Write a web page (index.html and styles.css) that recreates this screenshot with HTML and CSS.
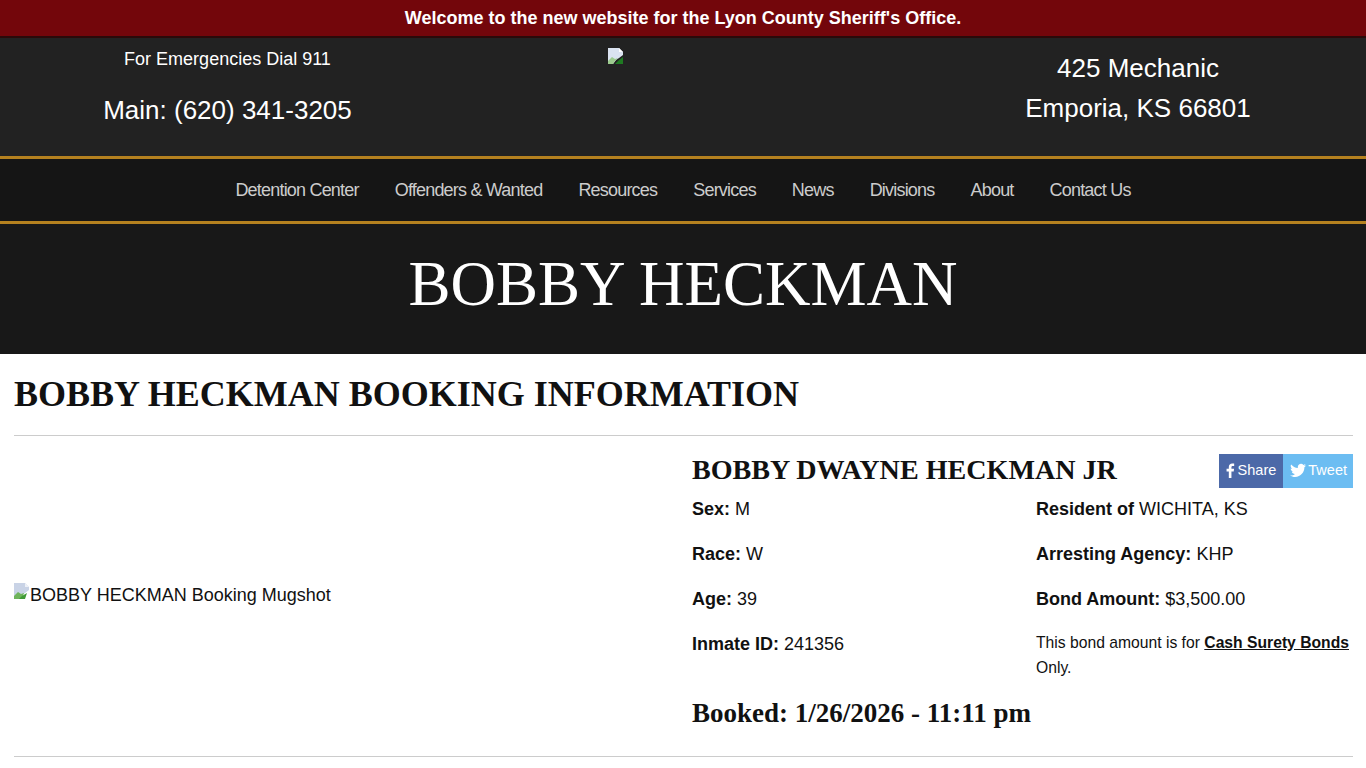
FILE: index.html
```html
<!DOCTYPE html>
<html lang="en">
<head>
  <meta charset="UTF-8" />
  <meta name="viewport" content="width=device-width, initial-scale=1.0"/>
  <title>Bobby Heckman - Lyon County Sheriff's Office</title>
  <link rel="stylesheet" href="styles.css">
</head>
<body>
  <div class="welcome">Welcome to the new website for the Lyon County Sheriff's Office.</div>

  <header class="top">
    <div class="top-left">
      <p class="emergency">For Emergencies Dial 911</p>
      <p class="phone">Main: (620) 341-3205</p>
    </div>
    <div class="top-logo">
      <svg class="broken" viewBox="0 0 16 16" aria-hidden="true">
        <path d="M0 0h11l4 4v3l-4 3-3 2-3 4H0z" fill="#dbe3f1"/>
        <path d="M11 0l4 4h-4z" fill="#fff"/>
        <path d="M0 16v-3l4-4 3 2 3-1-3 3-2 3z" fill="#9ccb8e"/>
        <path d="M7 16l4-4 4-3v7z" fill="#1f7a22"/>
      </svg>
    </div>
    <div class="top-right">
      <p>425 Mechanic</p>
      <p>Emporia, KS 66801</p>
    </div>
  </header>

  <nav class="mainnav">
    <a href="#">Detention Center</a>
    <a href="#">Offenders &amp; Wanted</a>
    <a href="#">Resources</a>
    <a href="#">Services</a>
    <a href="#">News</a>
    <a href="#">Divisions</a>
    <a href="#">About</a>
    <a href="#">Contact Us</a>
  </nav>

  <div class="pagetitle">BOBBY HECKMAN</div>

  <main class="content">
    <h1>BOBBY HECKMAN BOOKING INFORMATION</h1>
    <hr>
    <div class="booking">
      <div class="mugshot">
        <svg class="broken" viewBox="0 0 16 16" aria-hidden="true">
          <path d="M0 0h11l4 4v3l-4 3-3 2-3 4H0z" fill="#c9d3e6"/>
          <path d="M11 0l4 4h-4z" fill="#eef1f7"/>
          <path d="M0 16v-3l4-4 3 2 3-1-1 3-1 3z" fill="#6fb45c"/>
          <path d="M5 16l3-3 5-3-2 6z" fill="#3f9a35"/>
        </svg><span>BOBBY HECKMAN Booking Mugshot</span>
      </div>
      <div class="info">
        <div class="info-head">
          <h2>BOBBY DWAYNE HECKMAN JR</h2>
          <div class="share">
            <a class="fb" href="#">
              <svg viewBox="1 0 9 16" aria-hidden="true"><path d="M6.500 16V9h2.400l.4-2.800H6.500V4.500c0-.8.2-1.400 1.400-1.400h1.500V.6C9.100.6 8.300.5 7.300.5 5.200.5 3.700 1.800 3.700 4.200v2H1.300V9h2.400v7z" fill="#fff"/></svg>
              Share</a>
            <a class="tw" href="#">
              <svg viewBox="0 0 16 14" aria-hidden="true"><path d="M16 1.900c-.6.300-1.200.4-1.900.5.700-.4 1.200-1 1.400-1.800-.6.400-1.300.7-2.100.8C12.800.7 12 .3 11.100.3 9.300.3 7.800 1.800 7.800 3.600c0 .3 0 .5.100.8C5.200 4.200 2.800 2.900 1.100.9.800 1.400.7 2 .7 2.600c0 1.100.6 2.100 1.500 2.700-.5 0-1-.2-1.500-.4 0 1.600 1.100 2.900 2.600 3.200-.5.100-1 .2-1.500.1.400 1.300 1.600 2.200 3.100 2.300C3.700 11.600 1.900 12.200 0 12c1.500.9 3.200 1.500 5 1.500 6 0 9.400-5 9.400-9.400v-.4c.6-.5 1.200-1.100 1.600-1.800z" fill="#fff"/></svg>
              Tweet</a>
          </div>
        </div>
        <div class="facts">
          <div class="fact"><strong>Sex:</strong> M</div>
          <div class="fact"><strong>Resident of</strong> WICHITA, KS</div>
          <div class="fact"><strong>Race:</strong> W</div>
          <div class="fact"><strong>Arresting Agency:</strong> KHP</div>
          <div class="fact"><strong>Age:</strong> 39</div>
          <div class="fact"><strong>Bond Amount:</strong> $3,500.00</div>
          <div class="fact"><strong>Inmate ID:</strong> 241356</div>
          <div class="fact bond-note">This bond amount is for <a href="#">Cash Surety Bonds</a> Only.</div>
        </div>
        <h3>Booked: 1/26/2026 - 11:11 pm</h3>
      </div>
    </div>
    <hr>
  </main>
</body>
</html>
```

FILE: styles.css
```css
body {
  font-family: "Liberation Sans", Arial, sans-serif;
  font-size: 18px;
  color: #111;
  background: white;
  margin: 0;
}
p {
  margin: 0;
}
.welcome {
  height: 36px;
  line-height: 37px;
  background: #73060b;
  border-bottom: 2px solid #2a0a0a;
  color: white;
  font-size: 18px;
  font-weight: bold;
  text-align: center;
}
.top {
  display: grid;
  grid-template-columns: 455px 455px 456px;
  height: 118px;
  background: #222;
  color: white;
  text-align: center;
}
.emergency {
  font-size: 18px;
  line-height: 24px;
  margin-top: 9px;
}
.phone {
  font-size: 26px;
  line-height: 32px;
  margin-top: 23px;
}
.top-logo {
  padding: 10px 0 0 153px;
  text-align: left;
}
.top-right {
  padding-top: 10px;
  font-size: 26px;
  line-height: 40px;
}
.broken {
  display: inline-block;
  width: 16px;
  height: 16px;
  vertical-align: top;
}
.mainnav {
  display: flex;
  justify-content: center;
  gap: 36px;
  height: 62px;
  line-height: 63px;
  background: #151515;
  border-top: 3px solid #b5811f;
  border-bottom: 3px solid #b5811f;
}
.mainnav a {
  color: #ccc;
  text-decoration: none;
  font-size: 18px;
  letter-spacing: -0.8px;
}
.pagetitle {
  height: 130px;
  line-height: 120px;
  background: #181818;
  color: white;
  font-family: "Liberation Serif", "Times New Roman", serif;
  font-size: 63px;
  text-align: center;
}
.content {
  padding: 0 13px 0 14px;
}
h1 {
  font-family: "Liberation Serif", "Times New Roman", serif;
  font-size: 36px;
  line-height: 40px;
  margin: 20px 0 21px;
}
hr {
  border: 0;
  border-top: 1px solid #ccc;
  margin: 0;
}
.booking {
  display: grid;
  grid-template-columns: 678px 1fr;
  height: 320px;
}
.mugshot {
  align-self: center;
  line-height: 24px;
  margin-top: -3px;
}
.info-head {
  display: flex;
  justify-content: space-between;
  height: 56px;
  padding-top: 18px;
  box-sizing: border-box;
}
h2 {
  font-family: "Liberation Serif", "Times New Roman", serif;
  font-size: 28.1px;
  line-height: 32px;
  margin: 0;
}
.share {
  display: flex;
  height: 34px;
}
.share a {
  display: flex;
  align-items: center;
  gap: 3px;
  padding: 0 6px 2px 7px;
  color: white;
  font-size: 14.5px;
  text-decoration: none;
}
.share svg {
  height: 15px;
}
.share .fb {
  padding-right: 7px;
  background: #4c69a8;
}
.share .fb svg {
  width: 9px;
}
.share .tw {
  gap: 2px;
  background: #6cbdf2;
}
.share .tw svg {
  width: 16px;
}
.facts {
  display: grid;
  grid-template-columns: 344px 1fr;
  grid-auto-rows: 45px;
  margin-top: 4px;
}
.fact {
  line-height: 26px;
}
.bond-note {
  margin-top: -1px;
  font-size: 15.7px;
  line-height: 25px;
}
.bond-note a {
  color: #111;
  font-weight: bold;
}
h3 {
  font-family: "Liberation Serif", "Times New Roman", serif;
  font-size: 27px;
  line-height: 34px;
  margin: 20px 0 0;
}
```
